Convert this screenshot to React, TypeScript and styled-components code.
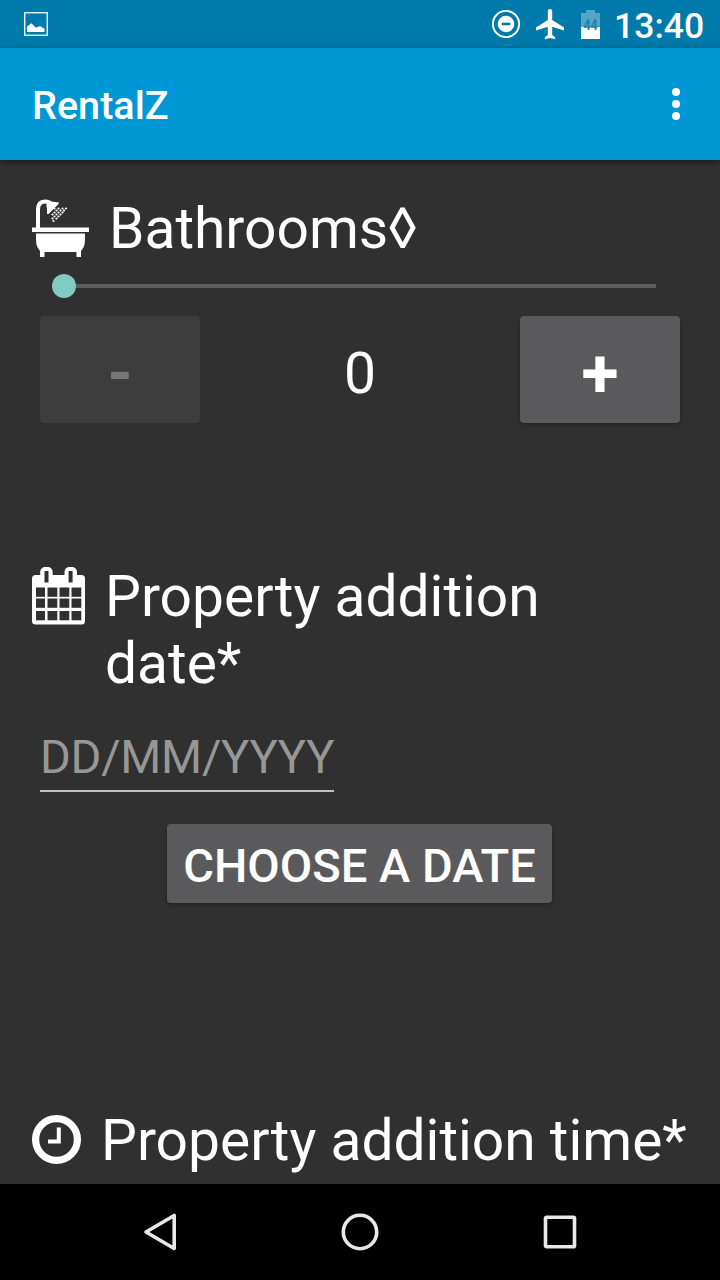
import React from 'react';
import styled, { createGlobalStyle } from 'styled-components';

const GlobalStyle = createGlobalStyle`
  * { box-sizing: border-box; }
  html, body { margin: 0; background: #303030; }
  svg { display: block; flex: none; }
`;

const Screen = styled.div`
  width: 720px;
  height: 1280px;
  display: flex;
  flex-direction: column;
  overflow: hidden;
  background: #303030;
  color: #fff;
  font-family: Roboto, sans-serif;
`;

const StatusBar = styled.header`
  flex: none;
  height: 48px;
  padding: 0 16px 0 24px;
  display: flex;
  align-items: center;
  background: #007aab;
`;

const StatusIcons = styled.div`
  margin-left: auto;
  display: flex;
  align-items: center;
`;

const Clock = styled.time`
  width: 90px;
  margin-left: 14px;
  padding-top: 5px;
  font-size: 35.6px;
  line-height: 43px;
  font-weight: 500;
  white-space: nowrap;
`;

const BatteryText = styled.text`
  font: 700 14.5px Roboto, sans-serif;
  fill: #1b83b0;
`;

const AppBar = styled.div`
  flex: none;
  height: 112px;
  padding: 4px 40px 0 32px;
  display: flex;
  align-items: center;
  justify-content: space-between;
  background: #0097d6;
  box-shadow: 0 2px 6px rgba(0, 0, 0, 0.45);
  z-index: 1;
`;

const Title = styled.h1`
  margin: 0;
  font-size: 39.6px;
  line-height: 48px;
  font-weight: 500;
`;

const MenuButton = styled.button`
  padding: 0;
  margin-top: -4px;
  border: 0;
  background: none;
`;

const Form = styled.main`
  flex: 1;
  min-height: 0;
  padding: 35px 32px 0;
  overflow: hidden;
`;

const Field = styled.section<{ $height: number }>`
  height: ${(p) => p.$height}px;
  display: flex;
  flex-direction: column;
`;

const Label = styled.h2<{ $iconTop: number }>`
  margin: 0;
  display: flex;
  align-items: flex-start;
  gap: 20px;
  font-size: 56.9px;
  line-height: 67px;
  font-weight: 400;
  svg { margin-top: ${(p) => p.$iconTop}px; }
`;

const LabelText = styled.span<{ $width?: number }>`
  width: ${(p) => (p.$width ? `${p.$width}px` : 'auto')};
  white-space: ${(p) => (p.$width ? 'normal' : 'nowrap')};
`;

const Slider = styled.div`
  display: flex;
  align-items: center;
  height: 24px;
  margin: 12px 32px 0 20px;
`;

const Thumb = styled.span`
  width: 24px;
  height: 24px;
  border-radius: 50%;
  background: #80cbc4;
`;

const Track = styled.span`
  flex: 1;
  height: 4px;
  background: #5d5d5d;
`;

const Stepper = styled.div`
  display: flex;
  justify-content: space-between;
  margin: 18px 8px 0;
`;

const StepButton = styled.button<{ $muted?: boolean }>`
  width: 160px;
  height: 107px;
  padding: ${(p) => (p.$muted ? 9 : 8)}px 0 0;
  border: 0;
  border-radius: 4px;
  background: ${(p) => (p.$muted ? '#3d3d3d' : '#5a5a5c')};
  color: ${(p) => (p.$muted ? '#777' : '#fff')};
  box-shadow: ${(p) => (p.$muted ? 'none' : '0 2px 4px rgba(0, 0, 0, 0.28)')};
  font: 700 ${(p) => (p.$muted ? 64 : 68)}px/98px Roboto, sans-serif;
`;

const Count = styled.output`
  padding-top: 5px;
  height: 107px;
  font-size: 57px;
  line-height: 106px;
`;

const DateInput = styled.div`
  width: 294px;
  height: 64px;
  margin: 31px 0 0 8px;
  border-bottom: 2px solid #c1c1c1;
  color: #979797;
  font-size: 47px;
  line-height: 58px;
  letter-spacing: -0.25px;
  white-space: nowrap;
`;

const DateButton = styled.button`
  width: 385px;
  height: 79px;
  margin: 32px 0 0 135px;
  padding: 4px 0 0;
  border: 0;
  border-radius: 4px;
  background: #5a5a5c;
  color: #fff;
  box-shadow: 0 2px 4px rgba(0, 0, 0, 0.28);
  font: 500 47.1px/75px Roboto, sans-serif;
  white-space: nowrap;
`;

const NavBar = styled.nav`
  flex: none;
  height: 96px;
  display: flex;
  align-items: center;
  justify-content: center;
  gap: 160px;
  background: #000;
`;

const PictureIcon = () => (
  <svg width="24" height="24" viewBox="0 0 24 24">
    <rect x=".75" y=".75" width="22.5" height="22.5" fill="none" stroke="#fff" strokeWidth="1.3" />
    <path d="M3 20V14.5L7.3 11.3L12 15.8L16 14L20.5 16.7V20Z" fill="#fff" />
  </svg>
);

const DisturbIcon = () => (
  <svg width="30" height="30" viewBox="0 0 30 30">
    <circle cx="15" cy="15" r="13.1" fill="none" stroke="#fff" strokeWidth="1.9" />
    <circle cx="15" cy="15" r="8.3" fill="#fff" />
    <path d="M10.7 15h8.6" stroke="#007aab" strokeWidth="2.6" />
  </svg>
);

const PlaneIcon = () => (
  <svg width="28" height="31" viewBox="0 0 28 31">
    <path d="M28 21.5V18.5L16.2 11V2.2a2.2 2.2 0 0 0-4.4 0V11L0 18.5v3l11.8-3.7v8.1L8.8 28.2V30.3l5.2-1.4 5.2 1.4v-2.1l-3-2.3v-8.1Z" fill="#fff" />
  </svg>
);

const BatteryIcon = () => (
  <svg width="19" height="29" viewBox="0 0 19 29">
    <path d="M0 3h5V0h9v3h5v14H0Z" fill="#fff" opacity=".33" />
    <path d="M0 17h19v12H0Z" fill="#fff" />
    <BatteryText x="2.4" y="19.5" textLength="14.2" lengthAdjust="spacingAndGlyphs">44</BatteryText>
  </svg>
);

const MoreIcon = () => (
  <svg width="8" height="32" viewBox="0 0 8 32" fill="#fff">
    <circle cx="4" cy="4" r="4" />
    <circle cx="4" cy="16" r="4" />
    <circle cx="4" cy="28" r="4" />
  </svg>
);

const DROPS = [
  [22.5, 9.5], [26.5, 9.5], [30.5, 9.5], [34, 9.5],
  [24.5, 11.5], [28.5, 11.5], [32, 11.5],
  [22.5, 13.5], [26.5, 13.5], [30.5, 13.5],
  [20.5, 15.5], [24.5, 15.5], [28.5, 15.5],
  [22.5, 17.5], [26.5, 17.5],
  [20.5, 19.5], [24.5, 19.5], [21.5, 22],
];

const BathIcon = () => (
  <svg width="57" height="58" viewBox="0 0 57 58" fill="#fff">
    <path d="M6 29V10.5Q6 2.5 13 2.5Q17 2.5 19 5" fill="none" stroke="#fff" strokeWidth="4" />
    <path d="M14.5 5Q15 3 19 2.5L27 3.5L26.5 5L16.5 15H15V9.5Q14 7 14.5 5Z" />
    {DROPS.map(([x, y], i) => <circle key={i} cx={x} cy={y} r="1.1" />)}
    <path d="M0 28.5h57v4.5H0Z" />
    <path d="M4 34.5h49v6q0 9-5.5 12.5h-38Q4 49.5 4 40.5Z" />
    <path d="M8 51h4.5v7H8ZM44.5 51H49v7h-4.5Z" />
  </svg>
);

const COLUMNS = [4, 15.5, 27.5, 39.5];
const ROWS = [20.5, 31.5, 44];

const CalendarIcon = () => (
  <svg width="53" height="58" viewBox="0 0 53 58" fill="#fff">
    <rect y="8" width="53" height="49.5" rx="3.5" />
    <rect x="8.2" width="12.5" height="17" rx="5" />
    <rect x="32.5" width="12.5" height="17" rx="5" />
    <g fill="#303030">
      <rect x="12.5" y="4" width="4" height="11.5" rx=".5" />
      <rect x="36.6" y="4" width="4" height="11.5" rx=".5" />
      {ROWS.map((y) => COLUMNS.map((x) => (
        <rect key={`${x}-${y}`} x={x} y={y} width={x === 4 ? 9 : 9.8} height="9.3" />
      )))}
    </g>
  </svg>
);

const ClockIcon = () => (
  <svg width="49" height="49" viewBox="0 0 49 49" fill="none" stroke="#fff">
    <circle cx="24.5" cy="24.5" r="20.9" strokeWidth="7.2" />
    <path d="M26.8 12.5V26.5H16" strokeWidth="4" />
  </svg>
);

const BackIcon = () => (
  <svg width="40" height="40" viewBox="0 0 40 40">
    <path d="M34.2 3.5V36.5L6 20Z" fill="none" stroke="#e8e8e8" strokeWidth="3.6" strokeLinejoin="round" />
  </svg>
);

const HomeIcon = () => (
  <svg width="40" height="40" viewBox="0 0 40 40">
    <circle cx="20" cy="20" r="16.7" fill="none" stroke="#e8e8e8" strokeWidth="3.6" />
  </svg>
);

const RecentIcon = () => (
  <svg width="40" height="40" viewBox="0 0 40 40">
    <rect x="5.5" y="5.2" width="29" height="29.5" rx="1" fill="none" stroke="#e8e8e8" strokeWidth="3.6" />
  </svg>
);

const StatusGlyph = styled.span<{ $right?: number }>`
  margin-right: ${(p) => p.$right ?? 0}px;
`;

export default function App() {
  return (
    <Screen>
      <GlobalStyle />
      <StatusBar>
        <PictureIcon />
        <StatusIcons>
          <StatusGlyph $right={15}><DisturbIcon /></StatusGlyph>
          <StatusGlyph $right={17}><PlaneIcon /></StatusGlyph>
          <StatusGlyph><BatteryIcon /></StatusGlyph>
          <Clock>13:40</Clock>
        </StatusIcons>
      </StatusBar>
      <AppBar>
        <Title>RentalZ</Title>
        <MenuButton aria-label="More options"><MoreIcon /></MenuButton>
      </AppBar>
      <Form>
        <Field $height={368}>
          <Label $iconTop={4}>
            <BathIcon />
            <LabelText>Bathrooms◊</LabelText>
          </Label>
          <Slider><Thumb /><Track /></Slider>
          <Stepper>
            <StepButton $muted disabled>-</StepButton>
            <Count>0</Count>
            <StepButton>+</StepButton>
          </Stepper>
        </Field>
        <Field $height={544}>
          <Label $iconTop={4}>
            <CalendarIcon />
            <LabelText $width={500}>Property addition date*</LabelText>
          </Label>
          <DateInput>DD/MM/YYYY</DateInput>
          <DateButton>CHOOSE A DATE</DateButton>
        </Field>
        <Field $height={70}>
          <Label $iconTop={8}>
            <ClockIcon />
            <LabelText>Property addition time*</LabelText>
          </Label>
        </Field>
      </Form>
      <NavBar>
        <BackIcon />
        <HomeIcon />
        <RecentIcon />
      </NavBar>
    </Screen>
  );
}
